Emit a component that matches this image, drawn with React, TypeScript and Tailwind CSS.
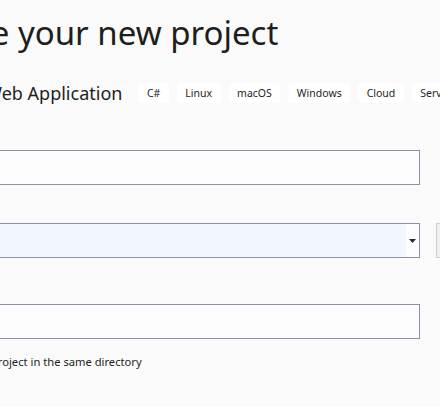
const tags = ["C#", "Linux", "macOS", "Windows", "Cloud", "Service", "Web"];

function Field({ label, children }: { label: string; children: React.ReactNode }) {
  return (
    <div className="flex flex-col">
      <label className="text-[12px] leading-[16px] text-[#1e1e1e] mb-[6px]">{label}</label>
      {children}
    </div>
  );
}

export default function App() {
  return (
    <div className="min-h-screen w-full overflow-hidden bg-[#fafafa] font-['Segoe_UI','Noto_Sans',sans-serif] text-[#1e1e1e]">
      <div className="ml-[-128px] w-[720px] pt-[10px]">
        <h1 className="ml-[-16px] text-[33px] leading-[46px] font-normal">Configure your new project</h1>

        <div className="mt-[24px] flex items-center gap-[16px]">
          <span className="ml-[-4px] text-[18px] leading-[26px]">ASP.NET Core Web Application</span>
          <div className="flex gap-[8px]">
            {tags.map((t) => (
              <span key={t} className="h-[20px] px-[8.5px] rounded-[4px] bg-white text-[10.5px] leading-[20px] whitespace-nowrap">
                {t}
              </span>
            ))}
          </div>
        </div>

        <div className="mt-[22px] flex flex-col">
          <Field label="Project name">
            <input className="w-[548px] h-[35px] border border-[#8a93a5] bg-[#fdfdfd] px-2 text-[13px] outline-none" defaultValue="" />
          </Field>

          <div className="mt-[16px]">
            <Field label="Location">
              <div className="flex items-center gap-[16px]">
                <div className="w-[548px] h-[35px] border border-[#8a93a5] bg-[#f2f6fe] flex justify-end">
                  <div className="w-[13px] h-full bg-[#fdfdfd] flex items-center justify-center">
                    <svg width="7" height="4" viewBox="0 0 7 4"><path d="M0 0h7L3.5 4z" fill="#1e2a44" /></svg>
                  </div>
                </div>
                <button className="w-[30px] h-[35px] border border-[#cfcfcf] bg-[#f0f0f0] text-[12px]">...</button>
              </div>
            </Field>
          </div>

          <div className="mt-[24px]">
            <Field label="Solution name">
              <input className="w-[548px] h-[35px] border border-[#8a93a5] bg-[#fdfdfd] px-2 text-[13px] outline-none" defaultValue="" />
            </Field>
          </div>
        </div>

        <label className="ml-[-2px] mt-[15px] flex items-center gap-[8px] text-[11.2px] leading-[16px]">
          <span className="w-[14px] h-[14px] border border-[#8a93a5] bg-white" />
          Place solution and project in the same directory
        </label>
      </div>
    </div>
  );
}
